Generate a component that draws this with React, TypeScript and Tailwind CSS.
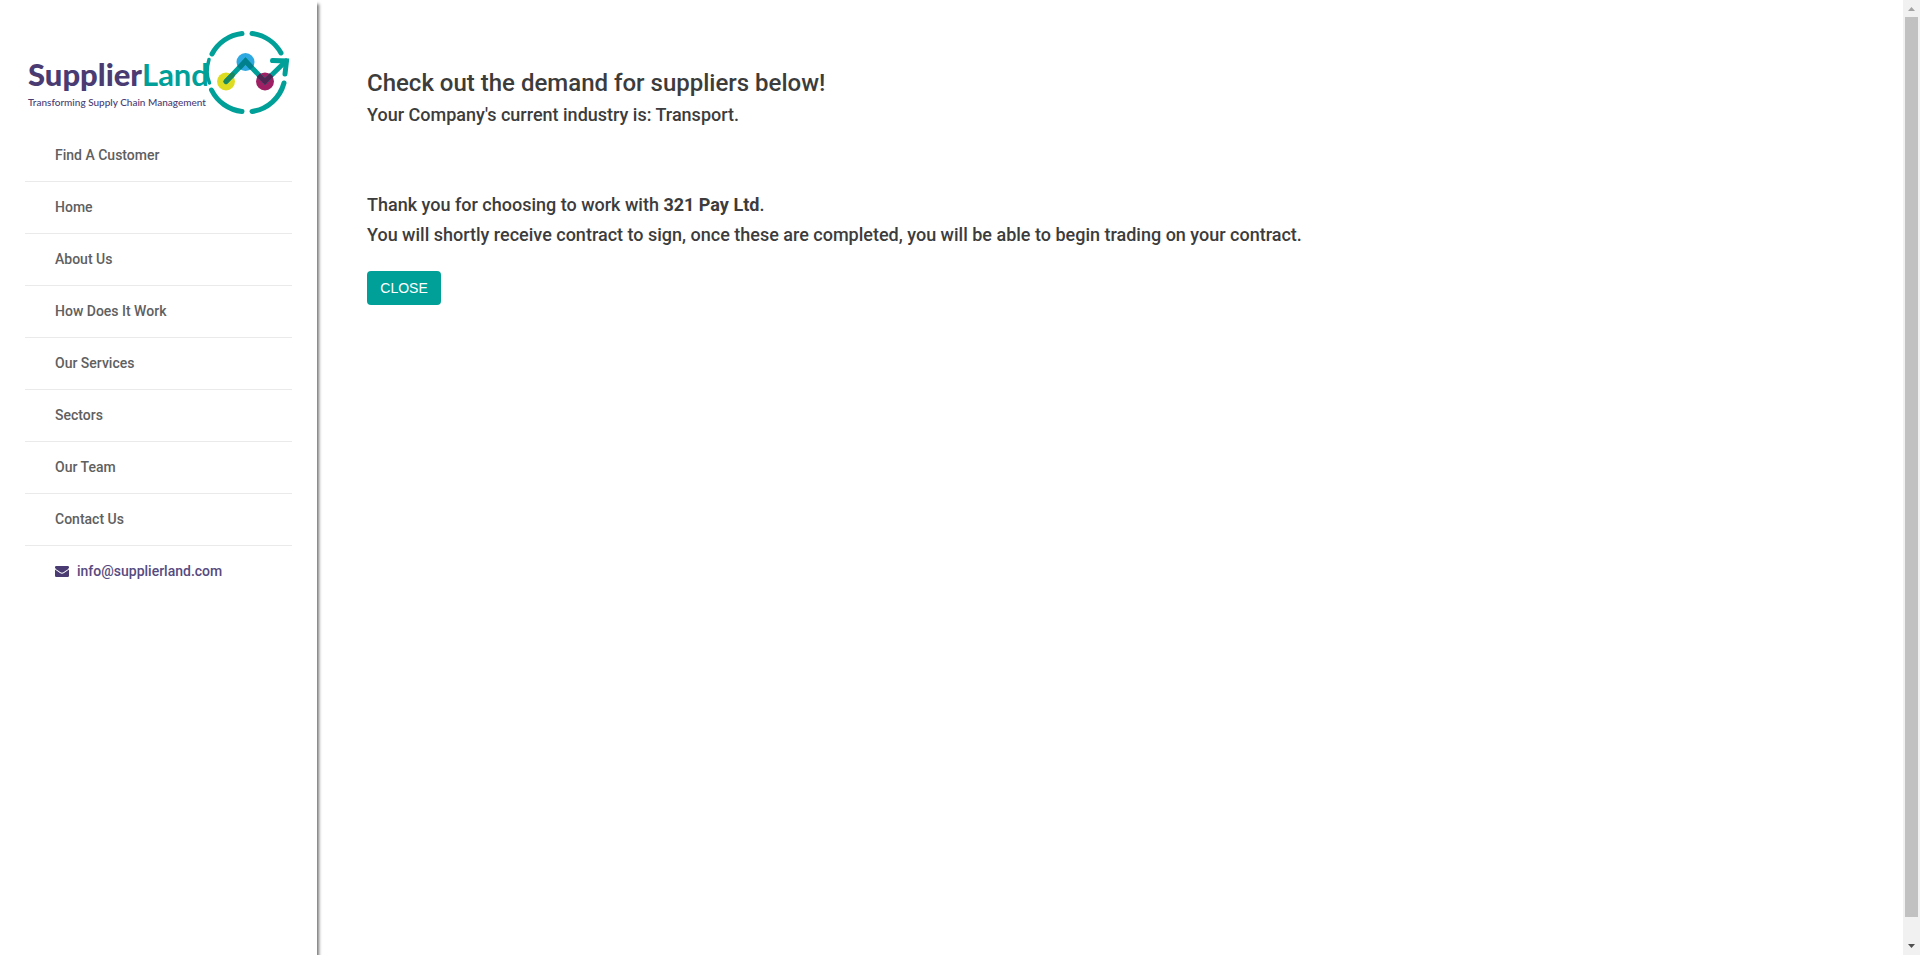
import React from "react";

const links = [
  "Find A Customer",
  "Home",
  "About Us",
  "How Does It Work",
  "Our Services",
  "Sectors",
  "Our Team",
  "Contact Us",
];

function Logo() {
  return (
    <svg viewBox="0 0 267 100" className="block w-full" role="img" aria-label="SupplierLand">
      <text x="3" y="66" fontFamily="Lato, 'Liberation Sans', sans-serif" fontSize="31" fontWeight="900" fill="#4a3c73">
        Supplier
        <tspan fill="#00a099" fontWeight="700">Land</tspan>
      </text>
      <text x="3" y="86" fontFamily="Lato, 'Liberation Sans', sans-serif" fontSize="10" fill="#4a3c73">
        Transforming Supply Chain Management
      </text>
      <g fill="none" stroke="#00a099" strokeWidth="5" strokeLinecap="round">
        <path d="M217 13.5A39 39 0 0 0 187 34" />
        <path d="M227 13.5A39 39 0 0 1 256 33" />
        <path d="M184 39.5Q180 53 184.500 63" strokeWidth="3.500" />
        <path d="M186.500 70A39 39 0 0 0 217 91.500" />
        <path d="M227 91.500A39 39 0 0 0 259 63" />
      </g>
      <circle cx="201" cy="61.500" r="9" fill="#dedc22" />
      <circle cx="220.500" cy="42" r="9" fill="#2ea8e0" />
      <circle cx="240" cy="61.500" r="9" fill="#9e1f63" />
      <g fill="none" stroke="#00a099" strokeWidth="5" strokeLinecap="round">
        <path d="M201 61.500L220.500 41L240 61.500L261 41" />
        <path d="M247.500 40.500L261.500 41L260 54" />
      </g>
      <path d="M201 61.500L207.500 55" stroke="#17875f" strokeWidth="5" strokeLinecap="round" />
      <path d="M214 48L220.500 41L227 48" fill="none" stroke="#007f8c" strokeWidth="5" />
      <path d="M233.500 55L240 61.500L246.500 55" fill="none" stroke="#512552" strokeWidth="5" />
    </svg>
  );
}

export default function App() {
  return (
    <div className="flex h-screen bg-white font-['Roboto',sans-serif] font-medium text-[#3c3c3c]">
      <aside className="w-[317px] shrink-0 bg-white px-[25px] shadow-[2px_4px_3px_0_#777]">
        <a href="#home" className="block pt-5 pb-[10px]">
          <Logo />
        </a>
        <nav>
          <ul className="text-sm text-[#606060]">
            {links.map((label) => (
              <li key={label} className="h-[52px] border-b border-[#eaeaea]">
                <a href="#page" className="flex h-full items-center pb-0.5 pl-[30px]">
                  {label}
                </a>
              </li>
            ))}
            <li className="h-[52px]">
              <a
                href="mailto:info@supplierland.com"
                className="flex h-full items-center gap-2 pb-0.5 pl-[30px] text-[#574a80]"
              >
                <svg viewBox="0 0 14 11" className="h-[11px] w-[14px]" fill="#4a3c73" aria-hidden="true">
                  <path d="M1.200 0h11.600Q14 0 14 1.200Q14 2.400 12.800 3.300L8.500 6.300Q7 7.200 5.500 6.300L1.200 3.300Q0 2.300 0 1.200Q0 0 1.200 0Z" />
                  <path d="M0 3.500L5 7.100Q7 8.400 9 7.100L14 3.500V9.800Q14 11 12.800 11H1.200Q0 11 0 9.800Z" />
                </svg>
                info@supplierland.com
              </a>
            </li>
          </ul>
        </nav>
      </aside>

      <main className="min-w-0 flex-1 pt-[67px] pl-[50px]">
        <h1 className="text-2xl leading-8">Check out the demand for suppliers below!</h1>
        <p className="text-lg leading-8">Your Company's current industry is: Transport.</p>
        <div className="mt-[59px] text-lg leading-[30px]">
          <p>
            Thank you for choosing to work with <b className="font-bold">321 Pay Ltd</b>.
          </p>
          <p>
            You will shortly receive contract to sign, once these are completed, you will be able to begin trading on
            your contract.
          </p>
        </div>
        <button
          type="button"
          className="mt-[21px] h-[34px] w-[74px] rounded bg-[#00a099] font-['Liberation_Sans',sans-serif] text-sm font-normal text-white"
        >
          CLOSE
        </button>
      </main>

      <div className="flex w-[17px] shrink-0 flex-col items-center bg-[#f1f1f1]" aria-hidden="true">
        <svg viewBox="0 0 17 17" className="h-[17px] w-[17px]" fill="#a3a3a3">
          <path d="M5 11L8.500 7L12 11Z" />
        </svg>
        <div className="mb-[21px] w-[13px] flex-1 bg-[#c1c1c1]" />
        <svg viewBox="0 0 17 17" className="h-[17px] w-[17px]" fill="#505050">
          <path d="M5 6L8.500 10L12 6Z" />
        </svg>
      </div>
    </div>
  );
}
